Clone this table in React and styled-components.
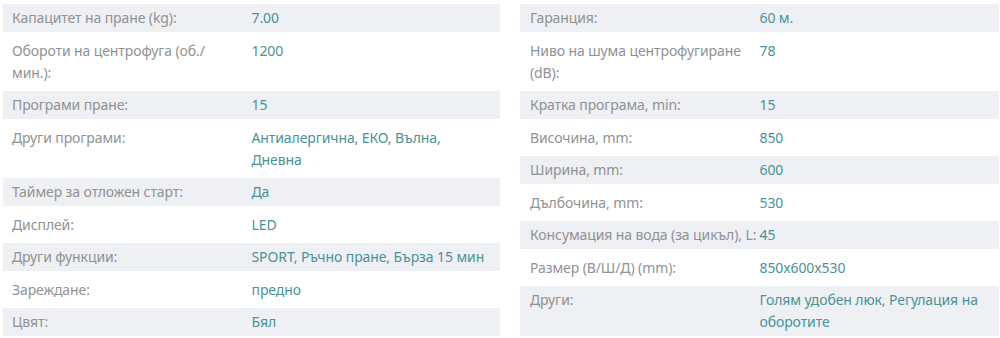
import React from "react";
import styled, { createGlobalStyle } from "styled-components";

const GlobalStyle = createGlobalStyle`
  html, body { margin: 0; padding: 0; background: #ffffff; }
  body { font-family: "Noto Sans", "Open Sans", sans-serif; }
`;

const Page = styled.div`
  display: grid;
  grid-template-columns: 497px 479px;
  column-gap: 20px;
  padding: 4px 0 0 3px;
  align-items: start;
`;

const Table = styled.div`
  display: flex;
  flex-direction: column;
  row-gap: 4.5px;
`;

const Row = styled.div`
  display: grid;
  grid-template-columns: 1fr 1fr;
  background: ${(p) => (p.$shaded ? "#eef0f3" : "transparent")};
  padding: 3px 0;
  font-size: 14px;
  line-height: 22px;
  letter-spacing: -0.1px;
`;

const Label = styled.div`
  color: #909294;
  padding-left: ${(p) => p.$padLeft}px;
  padding-right: ${(p) => p.$padRight}px;
`;

const Value = styled.div`
  color: #4a9397;
  padding-right: 10px;
`;

const left = [
  ["Капацитет на пране (kg):", "7.00"],
  ["Обороти на центрофуга (об./ мин.):", "1200"],
  ["Програми пране:", "15"],
  ["Други програми:", "Антиалергична, ЕКО, Вълна, Дневна"],
  ["Таймер за отложен старт:", "Да"],
  ["Дисплей:", "LED"],
  ["Други функции:", "SPORT, Ръчно пране, Бърза 15 мин"],
  ["Зареждане:", "предно"],
  ["Цвят:", "Бял"],
];

const right = [
  ["Гаранция:", "60 м."],
  ["Ниво на шума центрофугиране (dB):", "78"],
  ["Кратка програма, min:", "15"],
  ["Височина, mm:", "850"],
  ["Ширина, mm:", "600"],
  ["Дълбочина, mm:", "530"],
  ["Консумация на вода (за цикъл), L:", "45"],
  ["Размер (В/Ш/Д) (mm):", "850x600x530"],
  ["Други:", "Голям удобен люк, Регулация на оборотите"],
];

function Specs({ rows, padLeft, padRight }) {
  return (
    <Table>
      {rows.map(([k, v], i) => (
        <Row key={k} $shaded={i % 2 === 0}>
          <Label $padLeft={padLeft} $padRight={padRight}>
            {k}
          </Label>
          <Value>{v}</Value>
        </Row>
      ))}
    </Table>
  );
}

export default function App() {
  return (
    <>
      <GlobalStyle />
      <Page lang="bg">
        <Specs rows={left} padLeft={9} padRight={14} />
        <Specs rows={right} padLeft={10} padRight={0} />
      </Page>
    </>
  );
}
